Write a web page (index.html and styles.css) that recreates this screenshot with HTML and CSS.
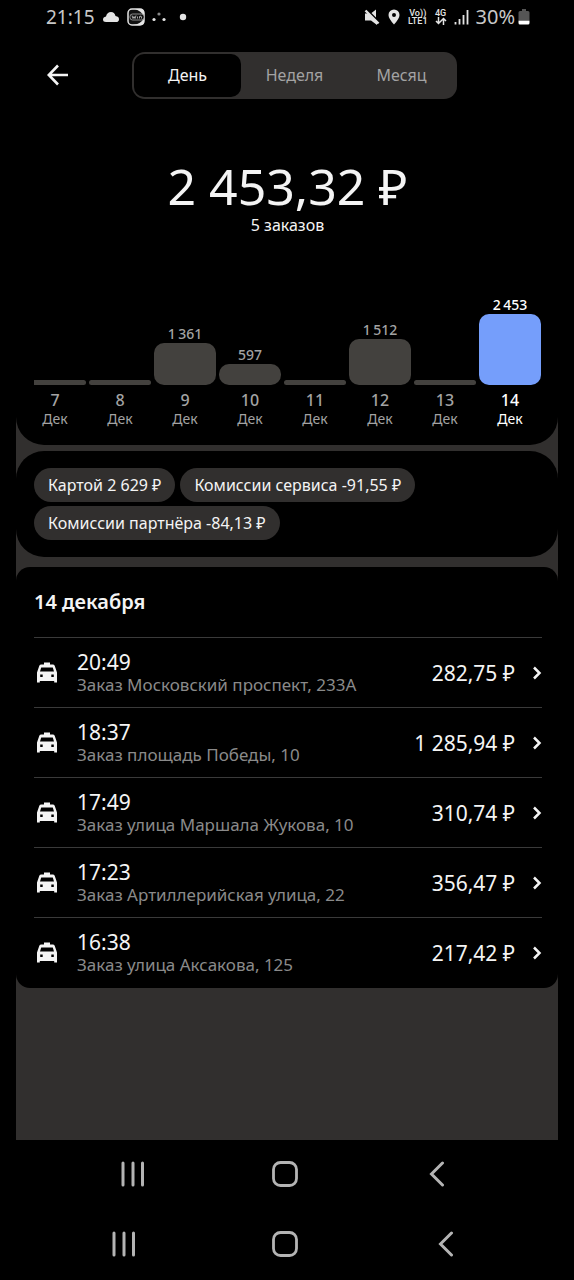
FILE: index.html
```html
<!DOCTYPE html>
<html lang="ru">
<head>
<meta charset="utf-8">
<meta name="viewport" content="width=device-width, initial-scale=1">
<title>Заработок за день</title>
<link rel="stylesheet" href="styles.css">
</head>
<body>
<svg class="defs" aria-hidden="true">
  <symbol id="taxi" viewBox="0 0 22 22">
    <path fill="currentColor" fill-rule="evenodd" d="M8 .500h6v2h2.800q1.400 0 1.900 1.300L21 10.500v10h-2.800V19H3.800v1.500H1v-10l2.300-6.700Q3.800 2.500 5.200 2.500H8zM5.200 5.500 4 9.500h14l-1.200-4zM4.200 12.500v2.500H6.700v-2.500zM15.300 12.500v2.500h2.500v-2.500z"/>
  </symbol>
  <symbol id="chevron" viewBox="0 0 10 14">
    <path d="M2 1.500 7.500 7 2 12.500" fill="none" stroke="currentColor" stroke-width="2.500"/>
  </symbol>
  <symbol id="recents" viewBox="0 0 26 26">
    <path d="M3 2v22M13 2v22M22.500 2v22" fill="none" stroke="currentColor" stroke-width="3" stroke-linecap="round"/>
  </symbol>
  <symbol id="home" viewBox="0 0 26 26">
    <rect x="1.500" y="1.500" width="23" height="23" rx="7" fill="none" stroke="currentColor" stroke-width="2.800"/>
  </symbol>
  <symbol id="back" viewBox="0 0 16 26">
    <path d="M13.500 2 2.500 13l11 11" fill="none" stroke="currentColor" stroke-width="3" stroke-linecap="round"/>
  </symbol>
</svg>
<div class="screen">
  <div class="status">
    <div class="status-group">
      <span class="status-time">21:15</span>
      <svg class="i-cloud" viewBox="0 0 18 12"><path fill="currentColor" d="M4 11Q1 11 1 8.500 1 6 4 5.500 5 1 9 1q3.500 0 4.500 4 3.500.500 3.500 3.200Q17 11 14 11z"/></svg>
      <svg class="i-win" viewBox="0 0 18 18"><rect x="1" y="1" width="16" height="16" rx="4" fill="#111" stroke="currentColor" stroke-width="1.500"/><path d="M8 1h6q3 0 3 3v4Q14 3 8 1zM17 10v4q0 3-3 3H6q8-1 11-7z" fill="currentColor"/><rect x="3" y="6" width="14" height="6" rx="2.500" fill="#111" stroke="#aaa" stroke-width=".8"/><path d="M5 7.500 6 10.500l1-2 1 2 1-3M10.500 8.500v2M12.500 10.500v-2q2-1 2 .500v1.500" fill="none" stroke="#ccc" stroke-width=".8"/></svg>
      <svg class="i-dots" viewBox="0 0 14 10"><g fill="currentColor"><circle cx="2" cy="7.500" r="1.600"/><circle cx="7" cy="2" r="1.600" opacity=".6"/><circle cx="12" cy="7.500" r="1.600"/></g></svg>
      <svg class="i-dot" viewBox="0 0 8 8"><circle cx="4" cy="4" r="3.200" fill="currentColor"/></svg>
    </div>
    <div class="status-group">
      <svg class="i-mute" viewBox="0 0 16 16"><path fill="currentColor" d="M1 4.500h4l8 8v3.500L7 11.500H1zM7.500 4 12 .5V8.500z"/><path d="M1.500 1.500 14.500 14.500" stroke="currentColor" stroke-width="2.400"/></svg>
      <svg class="i-pin" viewBox="0 0 12 16"><path fill="currentColor" fill-rule="evenodd" d="M6 .5a5.500 5.500 0 0 1 5.500 5.500Q11.500 9.500 6 15.500.5 9.500.5 6A5.500 5.500 0 0 1 6 .5zM6 4a2 2 0 1 0 0 4 2 2 0 0 0 0-4z"/></svg>
      <span class="net"><span>Vo))</span><span>LTE1</span></span>
      <span class="net"><span>4G</span><svg viewBox="0 0 12 8"><path d="M3.500 0v6M1 4l2.500 2.500L6 4M8.500 8V1.500M6 4l2.500-2.500L11 4" fill="none" stroke="currentColor" stroke-width="1.500"/></svg></span>
      <svg class="i-signal" viewBox="0 0 15 15"><path d="M1.500 12v2.500M5.500 9v5.500M9.500 5v9.500M13.500 0v14.500" stroke="currentColor" stroke-width="1.800"/></svg>
      <span class="battery-text">30%</span>
      <svg class="i-battery" viewBox="0 0 12 16"><path fill="#555" d="M4 0h4v2h2q1.500 0 1.500 1.500V11H.5V3.500Q.5 2 2 2h2z"/><path fill="#fff" d="M.5 11.500h11V14q0 1.500-1.500 1.500H2Q.5 15.500.5 14z"/></svg>
    </div>
  </div>

  <main class="app">
    <section class="panel summary">
      <div class="header">
        <button class="back" aria-label="Назад"><svg viewBox="0 0 22 22"><path d="M21 11H2M11 1.500 1.800 11l9.200 9.500" fill="none" stroke="currentColor" stroke-width="2.600"/></svg></button>
        <div class="segment">
          <button class="seg seg-on">День</button>
          <button class="seg">Неделя</button>
          <button class="seg">Месяц</button>
        </div>
      </div>
      <h1 class="total">2 453,32 ₽</h1>
      <p class="count">5 заказов</p>
      <div class="chart">
        <div class="col"><span class="bar" style="height:5px"></span><b class="num">7</b><span class="mon">Дек</span></div>
        <div class="col"><span class="bar" style="height:5px"></span><b class="num">8</b><span class="mon">Дек</span></div>
        <div class="col"><span class="val">1&thinsp;361</span><span class="bar" style="height:42px"></span><b class="num">9</b><span class="mon">Дек</span></div>
        <div class="col"><span class="val">597</span><span class="bar" style="height:21px"></span><b class="num">10</b><span class="mon">Дек</span></div>
        <div class="col"><span class="bar" style="height:5px"></span><b class="num">11</b><span class="mon">Дек</span></div>
        <div class="col"><span class="val">1&thinsp;512</span><span class="bar" style="height:46px"></span><b class="num">12</b><span class="mon">Дек</span></div>
        <div class="col"><span class="bar" style="height:5px"></span><b class="num">13</b><span class="mon">Дек</span></div>
        <div class="col col-on"><span class="val">2&thinsp;453</span><span class="bar" style="height:71px"></span><b class="num">14</b><span class="mon">Дек</span></div>
      </div>
    </section>

    <section class="panel chips">
      <span class="chip">Картой 2 629 ₽</span>
      <span class="chip">Комиссии сервиса -91,55 ₽</span>
      <span class="chip">Комиссии партнёра -84,13 ₽</span>
    </section>

    <section class="panel orders">
      <h2 class="date">14 декабря</h2>
      <button class="order"><svg class="taxi"><use href="#taxi"/></svg><span class="info"><span class="time">20:49</span><span class="addr">Заказ Московский проспект, 233А</span></span><span class="sum">282,75 ₽</span><svg class="chev"><use href="#chevron"/></svg></button>
      <button class="order"><svg class="taxi"><use href="#taxi"/></svg><span class="info"><span class="time">18:37</span><span class="addr">Заказ площадь Победы, 10</span></span><span class="sum">1 285,94 ₽</span><svg class="chev"><use href="#chevron"/></svg></button>
      <button class="order"><svg class="taxi"><use href="#taxi"/></svg><span class="info"><span class="time">17:49</span><span class="addr">Заказ улица Маршала Жукова, 10</span></span><span class="sum">310,74 ₽</span><svg class="chev"><use href="#chevron"/></svg></button>
      <button class="order"><svg class="taxi"><use href="#taxi"/></svg><span class="info"><span class="time">17:23</span><span class="addr">Заказ Артиллерийская улица, 22</span></span><span class="sum">356,47 ₽</span><svg class="chev"><use href="#chevron"/></svg></button>
      <button class="order"><svg class="taxi"><use href="#taxi"/></svg><span class="info"><span class="time">16:38</span><span class="addr">Заказ улица Аксакова, 125</span></span><span class="sum">217,42 ₽</span><svg class="chev"><use href="#chevron"/></svg></button>
    </section>
  </main>

  <nav class="nav nav-inner">
    <button aria-label="Недавние"><svg class="sq"><use href="#recents"/></svg></button>
    <button aria-label="Домой"><svg class="sq"><use href="#home"/></svg></button>
    <button aria-label="Назад"><svg class="nb"><use href="#back"/></svg></button>
  </nav>
  <nav class="nav nav-outer">
    <button aria-label="Недавние"><svg class="sq"><use href="#recents"/></svg></button>
    <button aria-label="Домой"><svg class="sq"><use href="#home"/></svg></button>
    <button aria-label="Назад"><svg class="nb"><use href="#back"/></svg></button>
  </nav>
</div>
</body>
</html>
```

FILE: styles.css
```css
* { box-sizing: border-box; }
body {
  margin: 0;
  background: #000;
  color: #f4f4f4;
  font-family: "Noto Sans", "Open Sans", sans-serif;
  font-size: 16px;
}
h1, h2, p { margin: 0; font-weight: 400; }
button {
  border: 0;
  padding: 0;
  background: none;
  color: inherit;
  font: inherit;
  cursor: pointer;
}
svg { display: block; flex: none; }
.defs { display: none; }
.screen { min-height: 100vh; display: flex; flex-direction: column; }

.status {
  height: 34px;
  padding: 0 44px 0 46px;
  display: flex;
  justify-content: space-between;
  align-items: center;
  color: #e4e4e4;
}
.status-group { display: flex; align-items: center; gap: 7px; }
.status-time, .battery-text { font-size: 19px; line-height: 24px; color: #c8c8c8; }
.battery-text { font-size: 20px; }
.i-cloud { width: 18px; height: 12px; }
.i-win { width: 18px; height: 18px; }
.i-dots { width: 14px; height: 10px; }
.i-dot { width: 8px; height: 8px; margin-left: 6px; }
.i-mute { width: 16px; height: 16px; }
.i-pin { width: 14px; height: 16px; }
.net {
  display: flex;
  flex-direction: column;
  align-items: center;
  font: 500 9px/8px Roboto, sans-serif;
}
.net svg { width: 12px; height: 8px; }
.i-signal { width: 15px; height: 15px; }
.i-battery { width: 12px; height: 16px; margin-left: -4px; }

.app {
  flex: 1;
  margin: 0 16px;
  display: flex;
  flex-direction: column;
  background: #312f2e;
}
.panel { background: #000; }
.summary { padding: 17px 17px 16px 18px; border-radius: 0 0 28px 28px; }
.header { display: flex; align-items: center; padding-right: 84px; }
.back { width: 48px; height: 48px; margin-right: 50px; display: grid; place-items: center; }
.back svg { width: 22px; height: 22px; }
.segment {
  flex: 1;
  height: 47px;
  padding: 2px;
  display: flex;
  border-radius: 13px;
  background: #312f2e;
}
.seg { flex: 1; border-radius: 10px; color: #a3a3a3; }
.seg-on { background: #000; color: #f4f4f4; }
.total {
  margin-top: 57px;
  font-size: 50px;
  line-height: 60px;
  text-align: center;
}
.count { line-height: 18px; margin-bottom: 62px; text-align: center; }
.chart {
  display: flex;
  justify-content: flex-end;
  align-items: flex-end;
  gap: 3px;
  overflow: hidden;
}
.col {
  flex: 0 0 62px;
  display: flex;
  flex-direction: column;
  align-items: center;
  color: #a3a3a3;
}
.val { font-size: 14px; line-height: 18px; font-weight: 500; }
.bar { width: 100%; border-radius: 10px; background: #43413e; }
.num { margin-top: 6px; font-size: 16px; line-height: 18px; font-weight: 500; }
.mon { font-size: 14px; line-height: 20px; }
.col-on { color: #fff; }
.col-on .bar { background: #759efb; }

.chips {
  margin-top: 6px;
  padding: 17px 18px;
  display: flex;
  flex-wrap: wrap;
  gap: 4px 5px;
  border-radius: 28px;
}
.chip {
  height: 34px;
  padding: 0 14px;
  border-radius: 17px;
  background: #312f2e;
  line-height: 34px;
}

.orders { margin-top: 10px; padding: 0 16px 0 18px; border-radius: 14px; }
.date { padding: 21px 0; font-size: 20px; line-height: 28px; font-weight: 600; }
.order {
  width: 100%;
  height: 70px;
  display: flex;
  align-items: center;
  border-top: 1px solid #3a3a3a;
  text-align: left;
}
.order:last-child { height: 71px; }
.taxi { width: 22px; height: 22px; margin: 0 19px 0 2px; }
.info { flex: 1; display: flex; flex-direction: column; }
.time { font-size: 21px; line-height: 24px; }
.addr { font-size: 17px; line-height: 22px; color: #8a8a8a; }
.sum { font-size: 21px; }
.chev { width: 10px; height: 14px; margin-left: 17px; }

.nav { display: flex; justify-content: space-between; align-items: center; color: #b4b4b4; }
.nav button { width: 48px; height: 48px; display: grid; place-items: center; }
.nav-inner { height: 67px; padding: 0 113px 0 109px; }
.nav-outer { height: 73px; padding: 0 104px 0 100px; }
.sq { width: 26px; height: 26px; }
.nb { width: 16px; height: 26px; }
```
